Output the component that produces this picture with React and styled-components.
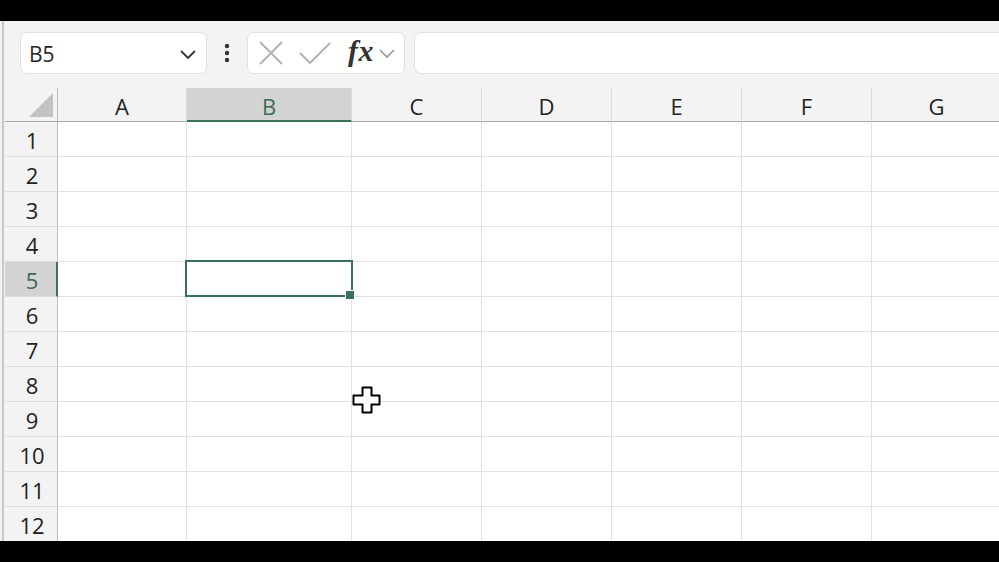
import React from "react";
import styled, { createGlobalStyle } from "styled-components";

const Global = createGlobalStyle`
  html, body { margin: 0; padding: 0; background: #000; }
  body { font-family: "Open Sans", "Noto Sans", sans-serif; }
  * { box-sizing: border-box; }
`;

const GREEN = "#3b7257";

const Page = styled.div`
  position: relative;
  width: 999px;
  height: 562px;
  display: flex;
  flex-direction: column;
  overflow: hidden;
  background: #000;
`;

const BlackBar = styled.div`
  height: ${(p) => p.h}px;
  flex: none;
  background: #000;
`;

const Window = styled.div`
  flex: 1;
  display: flex;
  min-height: 0;
  background: #f3f3f3;
`;

const LeftEdge = styled.div`
  width: 5px;
  flex: none;
  background: #f0f0f0;
  position: relative;
  &::after {
    content: "";
    position: absolute;
    left: 2px;
    top: 0;
    bottom: 0;
    width: 2px;
    background: #c9c9c9;
  }
`;

const Main = styled.div`
  flex: 1;
  display: flex;
  flex-direction: column;
  min-width: 0;
`;

const FormulaBar = styled.div`
  height: 67px;
  flex: none;
  display: flex;
  align-items: flex-start;
  padding: 11px 0 0 15px;
`;

const Box = styled.div`
  height: 42px;
  background: #fff;
  border: 1px solid #e1e1e1;
  border-radius: 7px;
  display: flex;
  align-items: center;
`;

const NameBox = styled(Box)`
  width: 187px;
  padding: 2px 7px 0 8px;
  justify-content: space-between;
  font-size: 21px;
  color: #262626;
`;

const Dots = styled.div`
  width: 40px;
  height: 42px;
  display: flex;
  align-items: center;
  justify-content: center;
`;

const FxBox = styled(Box)`
  width: 158px;
  padding: 0 0 0 10px;
`;

const Fx = styled.span`
  font-family: "Liberation Serif", "DejaVu Serif", serif;
  font-style: italic;
  font-weight: 600;
  font-size: 30px;
  color: #333;
  margin: 0 3px 0 16px;
  letter-spacing: 0.5px;
  line-height: 1;
  padding-bottom: 4px;
`;

const FormulaInput = styled(Box)`
  flex: 1;
  margin-left: 9px;
  border-right: none;
  border-radius: 7px 0 0 7px;
`;

const Grid = styled.div`
  flex: 1;
  min-height: 0;
  overflow: hidden;
  display: grid;
  grid-template-columns: 53px 129px 165px 130px 130px 130px 130px 130px;
  grid-template-rows: 34px repeat(13, 35px);
  background: #fff;
`;

const Corner = styled.div`
  background: #f3f3f3;
  border-right: 1px solid #bdbdbd;
  border-bottom: 1px solid #a9a9a9;
  position: relative;
  &::after {
    content: "";
    position: absolute;
    right: 4px;
    bottom: 4px;
    width: 0;
    height: 0;
    border-left: 24px solid transparent;
    border-bottom: 24px solid #c3c3c3;
  }
`;

const ColHead = styled.div`
  background: ${(p) => (p.$sel ? "#d3d3d3" : "#f3f3f3")};
  border-right: 1px solid #dcdcdc;
  border-bottom: ${(p) => (p.$sel ? `2px solid ${GREEN}` : "1px solid #a9a9a9")};
  color: ${(p) => (p.$sel ? "#3d6a55" : "#222")};
  font-size: 22px;
  display: flex;
  align-items: center;
  justify-content: center;
  padding-top: 3px;
`;

const RowHead = styled.div`
  background: ${(p) => (p.$sel ? "#d3d3d3" : "#f3f3f3")};
  border-right: ${(p) => (p.$sel ? `2px solid ${GREEN}` : "1px solid #bdbdbd")};
  border-bottom: 1px solid #dedede;
  color: ${(p) => (p.$sel ? "#3d6a55" : "#222")};
  font-size: 22px;
  display: flex;
  align-items: center;
  justify-content: center;
  padding-top: 2px;
  padding-left: ${(p) => (p.$sel ? 3 : 2)}px;
`;

const Cell = styled.div`
  background: #fff;
  border-right: 1px solid #e1e1e1;
  border-bottom: 1px solid #e1e1e1;
  position: relative;
  ${(p) =>
    p.$active &&
    `
    &::after {
      content: "";
      position: absolute;
      left: -2px;
      top: -2px;
      right: -2px;
      bottom: -1px;
      border: 2px solid ${GREEN};
      z-index: 2;
    }
    &::before {
      content: "";
      position: absolute;
      right: -4px;
      bottom: -4px;
      width: 8px;
      height: 8px;
      background: ${GREEN};
      border: 1px solid #fff;
      z-index: 3;
    }
  `}
`;

const Cursor = styled.svg`
  position: absolute;
  left: 352px;
  top: 386px;
  z-index: 5;
`;

const cols = ["A", "B", "C", "D", "E", "F", "G"];
const rows = Array.from({ length: 13 }, (_, i) => i + 1);

export default function App() {
  return (
    <Page>
      <Global />
      <BlackBar h={21} />
      <Window>
        <LeftEdge />
        <Main>
          <FormulaBar>
            <NameBox>
              <span>B5</span>
              <svg width="22" height="22" viewBox="0 0 22 22">
                <path d="M4 8 L11 15 L18 8" fill="none" stroke="#333" strokeWidth="1.8" />
              </svg>
            </NameBox>
            <Dots>
              <svg width="6" height="20" viewBox="0 0 6 20">
                <circle cx="3" cy="3" r="2.2" fill="#333" />
                <circle cx="3" cy="10" r="2.2" fill="#333" />
                <circle cx="3" cy="17" r="2.2" fill="#333" />
              </svg>
            </Dots>
            <FxBox>
              <svg width="26" height="26" viewBox="0 0 26 26">
                <path d="M2 2 L24 24 M24 2 L2 24" stroke="#b3b3b3" strokeWidth="2" fill="none" />
              </svg>
              <svg width="34" height="26" viewBox="0 0 34 26" style={{ marginLeft: 14 }}>
                <path d="M2 13 L12 23 L32 3" stroke="#b3b3b3" strokeWidth="2" fill="none" />
              </svg>
              <Fx>fx</Fx>
              <svg width="20" height="20" viewBox="0 0 20 20">
                <path d="M3 7 L10 14 L17 7" fill="none" stroke="#9a9a9a" strokeWidth="1.6" />
              </svg>
            </FxBox>
            <FormulaInput />
          </FormulaBar>
          <Grid>
            <Corner />
            {cols.map((c) => (
              <ColHead key={c} $sel={c === "B"}>
                {c}
              </ColHead>
            ))}
            {rows.map((r) => (
              <React.Fragment key={r}>
                <RowHead $sel={r === 5}>{r}</RowHead>
                {cols.map((c) => (
                  <Cell key={c} $active={r === 5 && c === "B"} />
                ))}
              </React.Fragment>
            ))}
          </Grid>
        </Main>
      </Window>
      <BlackBar h={21} />
      <Cursor width="30" height="30" viewBox="0 0 30 30">
        <path
          d="M10.5 1.5 H19.5 V9.5 H27.5 V18.5 H19.5 V26.5 H10.5 V18.5 H1.5 V9.5 H10.5 Z"
          fill="#fff"
          stroke="#000"
          strokeWidth="2"
          strokeLinejoin="round"
        />
      </Cursor>
    </Page>
  );
}
